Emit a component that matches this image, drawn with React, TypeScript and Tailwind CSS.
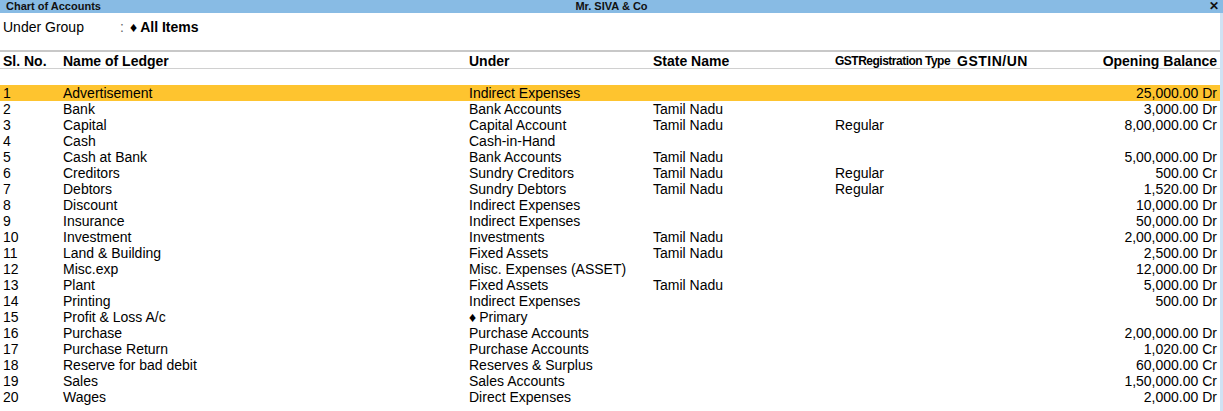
import React from "react";

type Row = {
  no: number;
  name: string;
  under: string;
  state?: string;
  reg?: string;
  bal: string;
  primary?: boolean;
};

const ROWS: Row[] = [
  { no: 1, name: "Advertisement", under: "Indirect Expenses", bal: "25,000.00 Dr" },
  { no: 2, name: "Bank", under: "Bank Accounts", state: "Tamil Nadu", bal: "3,000.00 Dr" },
  { no: 3, name: "Capital", under: "Capital Account", state: "Tamil Nadu", reg: "Regular", bal: "8,00,000.00 Cr" },
  { no: 4, name: "Cash", under: "Cash-in-Hand", bal: "" },
  { no: 5, name: "Cash at Bank", under: "Bank Accounts", state: "Tamil Nadu", bal: "5,00,000.00 Dr" },
  { no: 6, name: "Creditors", under: "Sundry Creditors", state: "Tamil Nadu", reg: "Regular", bal: "500.00 Cr" },
  { no: 7, name: "Debtors", under: "Sundry Debtors", state: "Tamil Nadu", reg: "Regular", bal: "1,520.00 Dr" },
  { no: 8, name: "Discount", under: "Indirect Expenses", bal: "10,000.00 Dr" },
  { no: 9, name: "Insurance", under: "Indirect Expenses", bal: "50,000.00 Dr" },
  { no: 10, name: "Investment", under: "Investments", state: "Tamil Nadu", bal: "2,00,000.00 Dr" },
  { no: 11, name: "Land & Building", under: "Fixed Assets", state: "Tamil Nadu", bal: "2,500.00 Dr" },
  { no: 12, name: "Misc.exp", under: "Misc. Expenses (ASSET)", bal: "12,000.00 Dr" },
  { no: 13, name: "Plant", under: "Fixed Assets", state: "Tamil Nadu", bal: "5,000.00 Dr" },
  { no: 14, name: "Printing", under: "Indirect Expenses", bal: "500.00 Dr" },
  { no: 15, name: "Profit & Loss A/c", under: "Primary", primary: true, bal: "" },
  { no: 16, name: "Purchase", under: "Purchase Accounts", bal: "2,00,000.00 Dr" },
  { no: 17, name: "Purchase Return", under: "Purchase Accounts", bal: "1,020.00 Cr" },
  { no: 18, name: "Reserve for bad debit", under: "Reserves & Surplus", bal: "60,000.00 Cr" },
  { no: 19, name: "Sales", under: "Sales Accounts", bal: "1,50,000.00 Cr" },
  { no: 20, name: "Wages", under: "Direct Expenses", bal: "2,000.00 Dr" },
];

const COLS = "grid grid-cols-[60px_406px_184px_182px_122px_1fr] pl-[3px] pr-[3px]";

export default function App() {
  return (
    <div className="w-[1223px] h-[411px] bg-white text-black flex flex-col overflow-hidden font-['Liberation_Sans',Arial,sans-serif]">
      {/* Title bar */}
      <div className="h-[13px] bg-[#88bbe4] grid grid-cols-3 items-center text-[11px] font-bold leading-[13px] text-[#111]">
        <div className="pl-[6px]">Chart of Accounts</div>
        <div className="text-center">Mr. SIVA &amp; Co</div>
        <div className="text-right pr-[4px] text-[12px]">✕</div>
      </div>

      <div className="flex flex-1 min-h-0">
        <div className="flex-1 flex flex-col">
          {/* Under group */}
          <div className="flex items-center h-[16px] mt-[6px] text-[14px] leading-[16px] pl-[3px]">
            <span className="w-[117px]">Under Group</span>
            <span className="w-[10px] text-[#666]">:</span>
            <span className="font-bold flex items-center">
              <span className="text-[14px] mr-[3px]">♦</span>All Items
            </span>
          </div>

          {/* Header */}
          <div className="mt-[15px] border-t-2 border-[#c8c8c8]">
            <div className={`${COLS} h-[16px] items-center text-[14px] font-bold leading-[16px] border-b border-[#d0d0d0] pb-[1px] mt-[1px]`}>
              <div>Sl. No.</div>
              <div>Name of Ledger</div>
              <div>Under</div>
              <div>State Name</div>
              <div className="text-[12px] tracking-[-0.5px]">GSTRegistration Type</div>
              <div className="flex justify-between">
                <span className="tracking-[0.5px]">GSTIN/UN</span>
                <span>Opening Balance</span>
              </div>
            </div>
          </div>

          {/* Rows */}
          <div className="mt-[16px] flex flex-col text-[14px] leading-[16px]">
            {ROWS.map((r) => (
              <div
                key={r.no}
                className={`${COLS} h-[16px] ${r.no === 1 ? "bg-[#fec42f]" : ""}`}
              >
                <div>{r.no}</div>
                <div>{r.name}</div>
                <div>
                  {r.primary && <span className="text-[14px] mr-[3px]">♦</span>}
                  {r.under}
                </div>
                <div>{r.state ?? ""}</div>
                <div>{r.reg ?? ""}</div>
                <div className="text-right">{r.bal}</div>
              </div>
            ))}
          </div>
        </div>
        <div className="w-[3px] bg-[#cfe2f3]" />
      </div>
    </div>
  );
}
